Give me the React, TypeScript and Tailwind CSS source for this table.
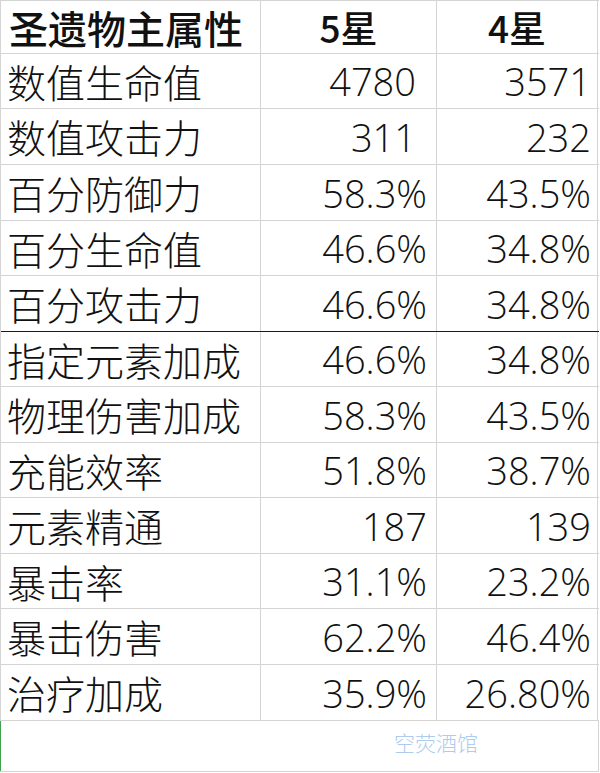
import React from 'react';

type Row = { name: string; five: string; four: string; h: string; fivePad?: string; thick?: boolean };

const ROWS: Row[] = [
  { name: '数值生命值', five: '4780', four: '3571', h: 'h-[55px]', fivePad: 'pr-[20px]' },
  { name: '数值攻击力', five: '311', four: '232', h: 'h-[56px]', fivePad: 'pr-[20px]' },
  { name: '百分防御力', five: '58.3%', four: '43.5%', h: 'h-[56px]' },
  { name: '百分生命值', five: '46.6%', four: '34.8%', h: 'h-[55px]' },
  { name: '百分攻击力', five: '46.6%', four: '34.8%', h: 'h-[56px]', thick: true },
  { name: '指定元素加成', five: '46.6%', four: '34.8%', h: 'h-[55px]' },
  { name: '物理伤害加成', five: '58.3%', four: '43.5%', h: 'h-[56px]' },
  { name: '充能效率', five: '51.8%', four: '38.7%', h: 'h-[55px]' },
  { name: '元素精通', five: '187', four: '139', h: 'h-[56px]' },
  { name: '暴击率', five: '31.1%', four: '23.2%', h: 'h-[55px]' },
  { name: '暴击伤害', five: '62.2%', four: '46.4%', h: 'h-[56px]' },
  { name: '治疗加成', five: '35.9%', four: '26.80%', h: 'h-[56px]' },
];

const cjk = "font-['Noto_Sans_CJK_SC',sans-serif]";
const num = "font-['Open_Sans','Noto_Sans_CJK_SC',sans-serif] font-light";

export default function App() {
  return (
    <div className="w-[600px] h-[773px] bg-white text-[#111] overflow-hidden">
      <div className="w-[599px] border-l border-t border-[#d4d4d4]">
        {/* header */}
        <div className="grid grid-cols-[260px_176px_161px] h-[53px] border-b border-[#d4d4d4]">
          <div className={`${cjk} font-medium text-[39px] leading-none flex items-center pl-[8px] border-r border-[#d4d4d4]`}>
            圣遗物主属性
          </div>
          <div className={`${cjk} font-medium text-[37px] leading-none flex items-center justify-center border-r border-[#d4d4d4]`}>
            5星
          </div>
          <div className={`${cjk} font-medium text-[37px] leading-none flex items-center justify-center border-r border-[#d4d4d4]`}>
            4星
          </div>
        </div>

        {ROWS.map((r) => (
          <div
            key={r.name}
            className={`grid grid-cols-[260px_176px_161px] ${r.h} border-b ${r.thick ? 'border-[#1a1a1a]' : 'border-[#d4d4d4]'}`}
          >
            <div className={`${cjk} font-light text-[39px] leading-none flex items-center pl-[6px] border-r border-[#d4d4d4]`}>
              {r.name}
            </div>
            <div className={`${num} text-[38px] leading-none flex items-center justify-end ${r.fivePad ?? 'pr-[9px]'} border-r border-[#d4d4d4]`}>
              {r.five}
            </div>
            <div className={`${num} text-[38px] leading-none flex items-center justify-end pr-[6px] border-r border-[#d4d4d4]`}>
              {r.four}
            </div>
          </div>
        ))}

        {/* blank footer row with watermark */}
        <div className="relative h-[51px] border-b border-r border-[#d4d4d4]">
          <div className="absolute left-0 top-0 bottom-0 w-px -ml-px bg-[#3fa34d]" />
          <div className="absolute left-[393px] top-[11px] text-[21px] leading-none text-[#aecbee] font-['Noto_Sans_CJK_SC',sans-serif] font-light">
            空荧酒馆
          </div>
        </div>
      </div>
    </div>
  );
}
